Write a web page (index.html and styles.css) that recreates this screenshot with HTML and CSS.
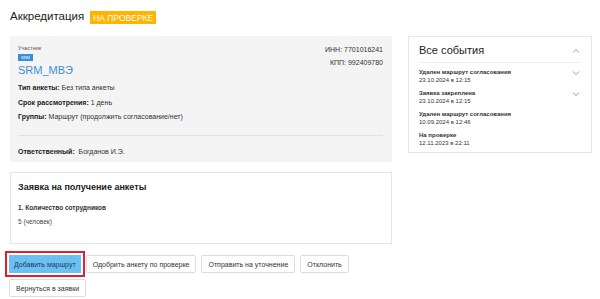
FILE: index.html
```html
<!DOCTYPE html>
<html>

<head>
  <meta charset="utf-8">
  <title>Аккредитация</title>
  <link rel="stylesheet" href="styles.css">
</head>

<body>
  <div class="page-title">
    <h1>Аккредитация</h1>
    <span class="status">На проверке</span>
  </div>

  <div class="layout">
    <div class="main-col">
      <div class="info-card">
        <div class="info-top">
          <div>
            <div class="label-small">Участник</div>
            <span class="tag">SRM</span>
            <a class="member-link" href="#">SRM_МВЭ</a>
          </div>
          <div class="requisites">
            <div>ИНН: 7701016241</div>
            <div>КПП: 992409780</div>
          </div>
        </div>
        <div class="info-row"><b>Тип анкеты:</b> Без типа анкеты</div>
        <div class="info-row"><b>Срок рассмотрения:</b> 1 день</div>
        <div class="info-row"><b>Группы:</b> Маршрут (продолжить согласование/нет)</div>
        <div class="info-footer"><b>Ответственный:</b>&nbsp; Богданов И.Э.</div>
      </div>

      <div class="request-card">
        <h2>Заявка на получение анкеты</h2>
        <div class="question">1. Количество сотрудников</div>
        <div class="answer">5 (человек)</div>
      </div>

      <div class="actions">
        <button class="btn btn-primary">Добавить маршрут</button>
        <button class="btn">Одобрить анкету по проверке</button>
        <button class="btn">Отправить на уточнение</button>
        <button class="btn">Отклонить</button>
        <button class="btn">Вернуться в заявки</button>
      </div>
    </div>

    <div class="side-col">
      <div class="events-card">
        <div class="events-head">
          <span>Все события</span>
          <svg width="8" height="5" viewBox="0 0 8 5"><path d="M1 4.5 L4 1.5 L7 4.5" fill="none" stroke="#999" stroke-width="1"/></svg>
        </div>
        <div class="event">
          <div>
            <div class="event-title">Удален маршрут согласования</div>
            <div class="event-date">23.10.2024 в 12:15</div>
          </div>
          <svg width="8" height="5" viewBox="0 0 8 5"><path d="M1 0.5 L4 3.5 L7 0.5" fill="none" stroke="#999" stroke-width="1"/></svg>
        </div>
        <div class="event">
          <div>
            <div class="event-title">Заявка закреплена</div>
            <div class="event-date">23.10.2024 в 12:15</div>
          </div>
          <svg width="8" height="5" viewBox="0 0 8 5"><path d="M1 0.5 L4 3.5 L7 0.5" fill="none" stroke="#999" stroke-width="1"/></svg>
        </div>
        <div class="event">
          <div>
            <div class="event-title">Удален маршрут согласования</div>
            <div class="event-date">10.09.2024 в 12:46</div>
          </div>
        </div>
        <div class="event">
          <div>
            <div class="event-title">На проверке</div>
            <div class="event-date">12.11.2023 в 22:11</div>
          </div>
        </div>
      </div>
    </div>
  </div>
</body>

</html>
```

FILE: styles.css
```css
body {
  font-family: 'Liberation Sans', Arial, sans-serif;
  margin: 0;
  padding: 4px 8px 0 10px;
  color: #222;
  background: #fff;
}

.page-title {
  display: flex;
  align-items: center;
  gap: 6px;
  height: 24px;
}

.page-title h1 {
  font-size: 11.5px;
  font-weight: normal;
  margin: 0;
  color: #222;
}

.status {
  background-color: #ffb400;
  color: #fff;
  font-size: 8.5px;
  text-transform: uppercase;
  padding: 2px 3px 1px;
  margin-top: 2px;
}

.layout {
  display: flex;
  gap: 16px;
  margin-top: 8px;
}

.main-col {
  width: 382px;
  display: flex;
  flex-direction: column;
}

.side-col {
  width: 184px;
}

.info-card {
  background-color: #f4f4f4;
  padding: 8px 9px 7px 8px;
  height: 126px;
  box-sizing: border-box;
  font-size: 7px;
}

.info-top {
  display: flex;
  justify-content: space-between;
}

.label-small {
  font-size: 5.5px;
  color: #555;
  line-height: 8px;
}

.tag {
  display: inline-block;
  background-color: #3a8fd9;
  color: #fff;
  font-size: 4px;
  padding: 1px 3px;
  line-height: 5px;
  margin-top: 2px;
}

.member-link {
  display: block;
  color: #3d8fd6;
  font-size: 11px;
  text-decoration: none;
  margin-top: 3px;
  line-height: 12px;
}

.requisites {
  text-align: right;
  color: #333;
  font-size: 7px;
  line-height: 13px;
  margin-top: -1px;
}

.info-row {
  line-height: 14.5px;
  color: #333;
}

.info-top + .info-row {
  margin-top: 5px;
}

.info-row b,
.info-footer b {
  color: #222;
}

.info-footer {
  border-top: 1px solid #e2e2e2;
  margin-top: 10px;
  padding-top: 12px;
  color: #333;
}

.request-card {
  margin-top: 10px;
  border: 1px solid #e4e4e4;
  height: 72px;
  box-sizing: border-box;
  padding: 9px 7px;
}

.request-card h2 {
  font-size: 9px;
  margin: 0 0 12px;
  color: #222;
}

.question {
  font-size: 6.5px;
  font-weight: bold;
  color: #333;
}

.answer {
  font-size: 6.5px;
  color: #444;
  margin-top: 7px;
}

.actions {
  display: flex;
  flex-wrap: wrap;
  gap: 6px 5px;
  margin-top: 11px;
  margin-left: -1px;
  align-items: flex-start;
}

.btn {
  font-family: 'Liberation Sans', Arial, sans-serif;
  font-size: 7px;
  color: #333;
  background-color: #fff;
  border: 1px solid #ddd;
  border-radius: 2px;
  height: 18px;
  padding: 0 6px;
  cursor: pointer;
}

.btn-primary {
  background-color: #6cbff3;
  border-color: #6cbff3;
  color: #1d3c52;
  padding: 0 4px;
  border-radius: 0;
  outline: 2px solid #e3202a;
  outline-offset: 2px;
}

.events-card {
  border: 1px solid #e6e6e6;
  height: 117px;
  box-sizing: border-box;
  padding: 0 10px;
}

.events-head {
  display: flex;
  justify-content: space-between;
  align-items: center;
  font-size: 11px;
  height: 24px;
  border-bottom: 1px solid #eee;
  margin-bottom: 5px;
  padding-top: 1px;
}

.events-head svg {
  margin-right: 1px;
}

.event {
  display: flex;
  justify-content: space-between;
  align-items: flex-start;
  height: 21px;
}

.event svg {
  margin-top: 3px;
  margin-right: 1px;
}

.event-title {
  font-size: 6px;
  font-weight: bold;
  color: #333;
  line-height: 8px;
}

.event-date {
  font-size: 6px;
  color: #333;
  line-height: 8px;
}
```
